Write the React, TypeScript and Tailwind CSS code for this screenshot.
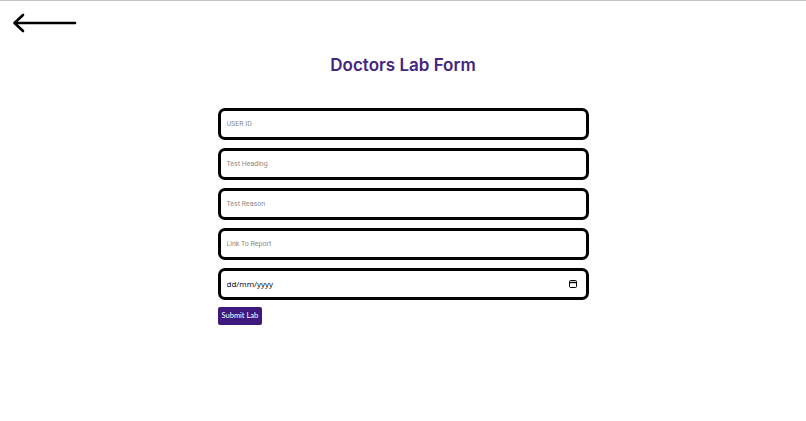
import { useState } from 'react';

const fields = [
  { name: 'userId', placeholder: 'USER ID' },
  { name: 'testHeading', placeholder: 'Test Heading' },
  { name: 'testReason', placeholder: 'Test Reason' },
  { name: 'reportLink', placeholder: 'Link To Report' },
];

export default function App() {
  const [values, setValues] = useState<Record<string, string>>({});

  return (
    <div className="min-h-[421px] w-full border-t border-[#c4c4c4] bg-white" style={{ fontFamily: 'Inter, "Noto Sans", sans-serif' }}>
      {/* back arrow */}
      <div className="pl-[12px] pt-[12px]">
        <svg width="66" height="22" viewBox="0 0 66 22" fill="none" stroke="black" strokeWidth="2.6" strokeLinecap="round" strokeLinejoin="round">
          <path d="M63 10H3" />
          <path d="M11 2L2.5 10L11 18" />
        </svg>
      </div>

      <h1 className="mt-[18px] text-center text-[17px] font-semibold leading-[24px] text-[#44257f]">Doctors Lab Form</h1>

      <form className="mx-auto mt-[31px] flex w-[371px] flex-col" onSubmit={(e) => e.preventDefault()}>
        <div className="flex flex-col gap-[8px]">
          {fields.map((f) => (
            <input
              key={f.name}
              type="text"
              placeholder={f.placeholder}
              value={values[f.name] ?? ''}
              onChange={(e) => setValues({ ...values, [f.name]: e.target.value })}
              className="h-[32px] w-full rounded-[7px] border-[3px] border-black px-[6px] text-[7px] outline-none placeholder:text-[#8a8a8a]"
              style={{ fontFamily: 'Roboto, sans-serif' }}
            />
          ))}
          <div className="flex h-[32px] w-full items-center rounded-[7px] border-[3px] border-black pl-[6px] pr-[9px]">
            <input
              type="text"
              placeholder="dd/mm/yyyy"
              value={values.date ?? ''}
              onChange={(e) => setValues({ ...values, date: e.target.value })}
              className="min-w-0 flex-1 text-[8px] text-black outline-none placeholder:text-black"
              style={{ fontFamily: '"Open Sans", sans-serif' }}
            />
            <svg width="8" height="8" viewBox="0 0 8 8" fill="none" stroke="black" strokeWidth="1">
              <rect x="0.5" y="0.5" width="7" height="7" rx="1" />
              <path d="M0.5 2.5H7.5" strokeWidth="1.4" />
            </svg>
          </div>
        </div>
        <div className="mt-[7px] flex">
          <button type="submit" className="h-[18px] rounded-[2px] bg-[#3e1a7c] px-[4px] text-[7.5px] leading-[18px] text-white" style={{ fontFamily: 'Lato, sans-serif' }}>
            Submit Lab
          </button>
        </div>
      </form>
    </div>
  );
}
